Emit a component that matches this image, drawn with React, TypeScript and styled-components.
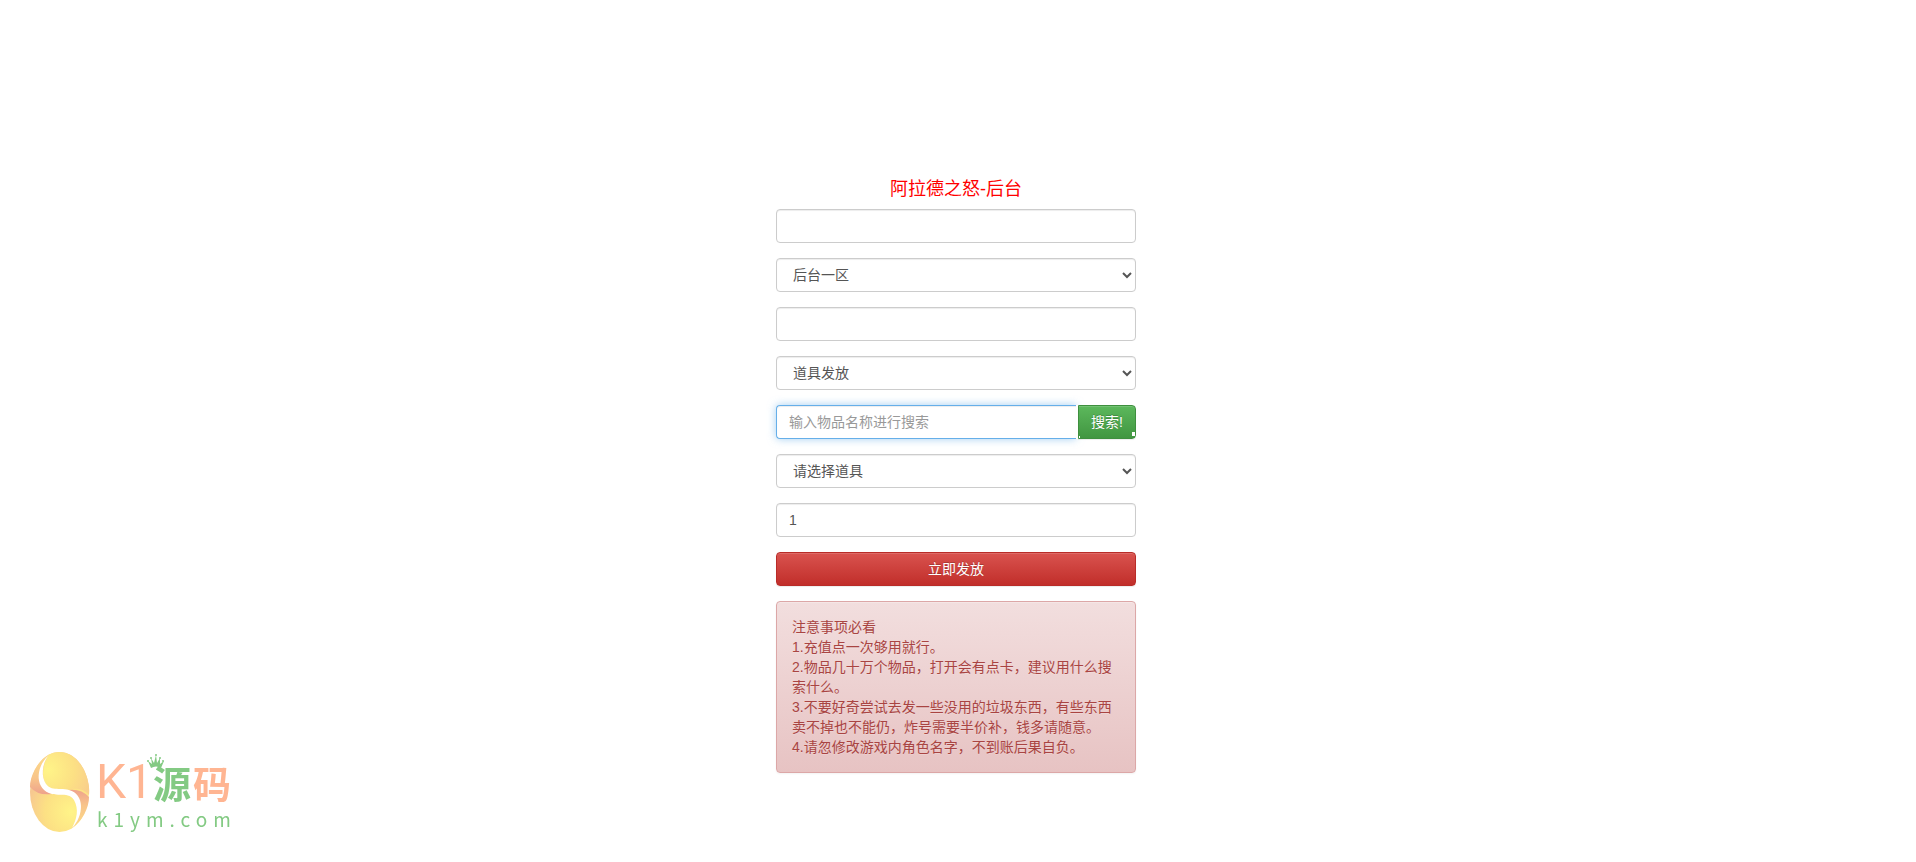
import React, { useState } from 'react';
import styled, { createGlobalStyle, css } from 'styled-components';

const GlobalStyle = createGlobalStyle`
  *, *::before, *::after { box-sizing: border-box; }
  body {
    margin: 0;
    background: #fff;
    color: #333;
    font: 14px/20px "Liberation Sans", Arial, "Noto Sans CJK SC", sans-serif;
  }
`;

const Page = styled.main`
  display: flex;
  justify-content: center;
  padding: 179px 19px 69px 15px;
`;

const Panel = styled.form`
  display: flex;
  flex-direction: column;
  gap: 15px;
  width: 100%;
  max-width: 360px;
`;

const Title = styled.h4`
  margin: 0 0 -5px;
  font-size: 18px;
  line-height: 20px;
  font-weight: 400;
  text-align: center;
  color: #f00;
`;

const field = css`
  display: block;
  width: 100%;
  height: 34px;
  margin: 0;
  padding: 6px 12px;
  font: inherit;
  color: #555;
  background-color: #fff;
  border: 1px solid #ccc;
  border-radius: 4px;
  box-shadow: inset 0 1px 1px rgba(0, 0, 0, 0.075);
  outline: 0;
`;

const TextField = styled.input`
  ${field}
`;

const SelectField = styled.select`
  ${field}
`;

const SearchGroup = styled.div`
  display: flex;
`;

const SearchField = styled.input`
  ${field}
  flex: 1;
  min-width: 0;
  border-color: #66afe9;
  border-right: 0;
  border-radius: 4px 0 0 4px;
  box-shadow: inset 0 1px 1px rgba(0, 0, 0, 0.075), 0 0 8px rgba(102, 175, 233, 0.6);
  &::placeholder {
    color: #999;
    opacity: 1;
  }
`;

const SearchAction = styled.div`
  position: relative;
  padding-left: 2px;
  background: #fff;
`;

const Button = styled.button<{ $tone: 'success' | 'danger' }>`
  display: block;
  height: 34px;
  margin: 0;
  padding: 6px 12px;
  font: inherit;
  color: #fff;
  border-radius: 4px;
  border: 1px solid ${(p) => (p.$tone === 'success' ? '#3e8f3e' : '#b92c28')};
  background: ${(p) =>
    p.$tone === 'success'
      ? 'linear-gradient(to bottom, #5cb85c 0%, #419641 100%)'
      : 'linear-gradient(to bottom, #d9534f 0%, #c12e2a 100%)'};
  box-shadow: inset 0 1px 0 rgba(255, 255, 255, 0.15), 0 1px 1px rgba(0, 0, 0, 0.075);
  text-shadow: 0 -1px 0 rgba(0, 0, 0, 0.2);
  cursor: pointer;
`;

const SearchButton = styled(Button)`
  border-radius: 0 4px 4px 0;
  &::before,
  &::after {
    content: '';
    position: absolute;
    background: #fff;
  }
  &::before {
    left: 3px;
    bottom: 1px;
    width: 1px;
    height: 2px;
  }
  &::after {
    right: 1px;
    bottom: 3px;
    width: 3px;
    height: 4px;
  }
`;

const Notice = styled.section`
  padding: 15px;
  color: #a94442;
  border: 1px solid #dca7a7;
  border-radius: 4px;
  background: linear-gradient(to bottom, #f2dede 0%, #e7c3c3 100%);
  box-shadow: inset 0 1px 0 rgba(255, 255, 255, 0.25), 0 1px 2px rgba(0, 0, 0, 0.05);
  text-shadow: 0 1px 0 rgba(255, 255, 255, 0.2);
  p {
    margin: 0;
  }
`;

const Watermark = styled.svg`
  position: fixed;
  left: 30px;
  bottom: 28px;
  overflow: visible;
  pointer-events: none;
`;

const Wordmark = styled.text`
  font-family: Roboto, sans-serif;
  font-size: 48px;
  fill: #ffb592;
`;

const Hanzi = styled.text`
  font-family: 'Noto Sans CJK SC', sans-serif;
  font-size: 38px;
  font-weight: 700;
`;

const Domain = styled.text`
  font-family: 'Noto Sans CJK SC', sans-serif;
  font-size: 19px;
  letter-spacing: 6px;
  fill: #83ca83;
`;

const Logo = () => (
  <Watermark width="204" height="82" viewBox="0 0 204 82" role="img" aria-label="K1源码 k1ym.com">
    <defs>
      <radialGradient id="top" cx="18" cy="18" r="44" gradientUnits="userSpaceOnUse">
        <stop offset="0" stopColor="#fff488" />
        <stop offset="0.6" stopColor="#fce084" />
        <stop offset="1" stopColor="#f9cf8b" />
      </radialGradient>
      <radialGradient id="bottom" cx="41" cy="60" r="44" gradientUnits="userSpaceOnUse">
        <stop offset="0" stopColor="#fff488" />
        <stop offset="0.6" stopColor="#fce084" />
        <stop offset="1" stopColor="#f7c890" />
      </radialGradient>
      <linearGradient id="leaf" x1="0" y1="0" x2="0" y2="1">
        <stop offset="0" stopColor="#fddc88" />
        <stop offset="0.6" stopColor="#f8c48a" />
        <stop offset="1" stopColor="#eea28c" />
      </linearGradient>
      <path id="lobe" d="M18 3C7 10 0 24 0 35Q8 44 22 42C9 37 4 20 18 3Z" fill="url(#leaf)" />
    </defs>
    <ellipse cx="29.5" cy="40" rx="29.5" ry="40" fill="url(#bottom)" />
    <path d="M18 3C30-4 45 1 53 16C58 25 60 35 59 43C53 36 44 36 36 38H23C13 35 9 20 18 3Z" fill="url(#top)" />
    <use href="#lobe" />
    <use href="#lobe" transform="rotate(180 29.5 40)" />
    <path d="M18 4C5 16 5 38 22 42C30 44 39 40 44 48C49 57 47 67 42 76C54 64 55 42 39 38C31 35 22 40 16 32C11 25 12 12 18 4Z" fill="#fff" />
    <Wordmark x="66" y="46">K1</Wordmark>
    <Hanzi x="123" y="46" fill="#83ca83">源</Hanzi>
    <Hanzi x="163" y="46" fill="#ffb592">码</Hanzi>
    <path d="M121 16L118 9L122 12L121 6L124 11L126 3L127 11L130 6L130 12L134 9L131 16Q126 13 121 16Z" fill="#83ca83" />
    <g fill="#83ca83">
      <circle cx="118" cy="9" r="1" />
      <circle cx="121" cy="6" r="1" />
      <circle cx="126" cy="3" r="1" />
      <circle cx="130" cy="6" r="1" />
      <circle cx="133" cy="9" r="1" />
    </g>
    <Domain x="67" y="75">k1ym.com</Domain>
  </Watermark>
);

export default function App() {
  const [count, setCount] = useState('1');
  return (
    <>
      <GlobalStyle />
      <Page>
        <Panel onSubmit={(e) => e.preventDefault()}>
          <Title>阿拉德之怒-后台</Title>
          <TextField type="password" aria-label="后台密码" />
          <SelectField aria-label="分区">
            <option>后台一区</option>
          </SelectField>
          <TextField type="text" aria-label="角色" />
          <SelectField aria-label="类型">
            <option>道具发放</option>
          </SelectField>
          <SearchGroup>
            <SearchField type="text" aria-label="物品名称" placeholder="输入物品名称进行搜索" />
            <SearchAction>
              <SearchButton type="button" $tone="success">搜索!</SearchButton>
            </SearchAction>
          </SearchGroup>
          <SelectField aria-label="道具">
            <option>请选择道具</option>
          </SelectField>
          <TextField type="text" aria-label="数量" value={count} onChange={(e) => setCount(e.target.value)} />
          <Button type="submit" $tone="danger">立即发放</Button>
          <Notice>
            <p>注意事项必看</p>
            <p>1.充值点一次够用就行。</p>
            <p>2.物品几十万个物品，打开会有点卡，建议用什么搜索什么。</p>
            <p>3.不要好奇尝试去发一些没用的垃圾东西，有些东西卖不掉也不能仍，炸号需要半价补，钱多请随意。</p>
            <p>4.请忽修改游戏内角色名字，不到账后果自负。</p>
          </Notice>
        </Panel>
      </Page>
      <Logo />
    </>
  );
}
